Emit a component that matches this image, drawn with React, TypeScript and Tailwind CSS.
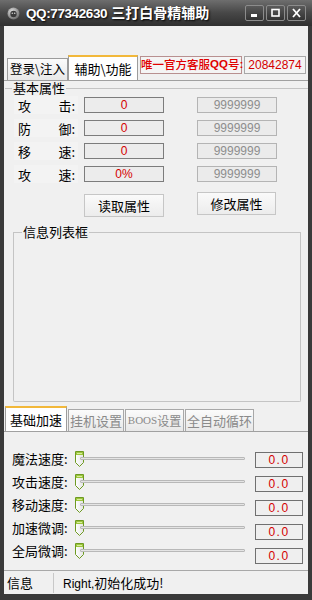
// 三打白骨精辅助 window: dark frame, two tab strips, attribute rows and speed sliders.

const rows = [
  { a: "攻", b: "击:", val: "0" },
  { a: "防", b: "御:", val: "0" },
  { a: "移", b: "速:", val: "0" },
  { a: "攻", b: "速:", val: "0%" },
];

const speeds = ["魔法速度:", "攻击速度:", "移动速度:", "加速微调:", "全局微调:"];

function WinButton({ kind }: { kind: "min" | "max" | "close" }) {
  return (
    <div className="flex h-[16px] w-[19px] items-center justify-center rounded-[2px] border border-[#8c8c8c] bg-gradient-to-b from-[#5a5a5a] to-[#333333]">
      <svg width="11" height="10" viewBox="0 0 11 10">
        {kind === "min" && <rect x="2" y="6" width="6" height="3" fill="#fff" />}
        {kind === "max" && (
          <rect x="2" y="1.5" width="7" height="6.5" fill="none" stroke="#fff" strokeWidth="1.6" />
        )}
        {kind === "close" && (
          <path d="M2 1 L9 9 M9 1 L2 9" stroke="#fff" strokeWidth="1.8" />
        )}
      </svg>
    </div>
  );
}

function TitleBar() {
  return (
    <div className="flex h-[26px] shrink-0 items-center bg-gradient-to-b from-[#6e6e6e] via-[#474747] to-[#303030] pl-[7px] pr-[6px]">
      <svg width="13" height="13" viewBox="0 0 13 13">
        <defs>
          <radialGradient id="ic" cx="40%" cy="35%" r="65%">
            <stop offset="0%" stopColor="#e8e8e8" />
            <stop offset="100%" stopColor="#707070" />
          </radialGradient>
        </defs>
        <circle cx="6.5" cy="6.5" r="6" fill="url(#ic)" />
        <circle cx="6.5" cy="7" r="3.2" fill="#3a3a3a" />
        <circle cx="5.3" cy="6.3" r="0.8" fill="#cfcfcf" />
        <circle cx="7.7" cy="6.3" r="0.8" fill="#cfcfcf" />
      </svg>
      <div className="ml-[6px] flex items-baseline font-bold text-white [text-shadow:1px_1px_2px_#000]">
        <span className="font-['Liberation_Sans',sans-serif] text-[13.5px] tracking-[-0.4px]">
          QQ:77342630
        </span>
        <span className="ml-[4px] text-[14px]">三打白骨精辅助</span>
      </div>
      <div className="ml-auto flex gap-[2px]">
        <WinButton kind="min" />
        <WinButton kind="max" />
        <WinButton kind="close" />
      </div>
    </div>
  );
}

function Thumb() {
  return (
    <svg width="9" height="16" viewBox="0 0 9 16" className="shrink-0">
      <defs>
        <linearGradient id="tb" x1="0" y1="0" x2="1" y2="0">
          <stop offset="0%" stopColor="#ffffff" />
          <stop offset="100%" stopColor="#e4e4e4" />
        </linearGradient>
      </defs>
      <path d="M0.5 0.5 H8.5 V11.5 L4.5 15.5 L0.5 11.5 Z" fill="url(#tb)" stroke="#6e9a22" />
      <rect x="1" y="1" width="7" height="3" fill="#9cc63c" />
      <rect x="2" y="2" width="5" height="1" fill="#d8ee9c" />
    </svg>
  );
}

export default function App() {
  return (
    <div className="flex h-[600px] w-[312px] flex-col overflow-hidden bg-[#3a3a3a] font-['Noto_Sans_CJK_SC','Noto_Sans',sans-serif] text-[12px] text-black">
      <TitleBar />
      <div className="mx-[4px] flex h-[568px] flex-col bg-[#f0f0f0]">
        {/* top tab strip */}
        <div className="mt-[29px] flex h-[25px] items-end pl-[3px]">
          <div className="flex h-[22px] w-[61px] items-center justify-center whitespace-nowrap border border-b-0 border-[#9c9c9c] bg-gradient-to-b from-[#fbfbfb] to-[#e8e8e8] text-[12.5px] leading-none">
            登录\注入
          </div>
          <div className="flex h-[25px] w-[70px] items-center justify-center whitespace-nowrap border-x border-t-2 border-x-[#9c9c9c] border-t-[#f2b83a] bg-white text-[13px] leading-none">
            辅助\功能
          </div>
          <div className="mb-[6px] ml-[2px] flex h-[18px] w-[102px] items-center whitespace-nowrap border border-[#b89090] bg-[#f4f4f4] text-[11.5px] font-medium leading-none text-[#e00000]">
            唯一官方客服<span className="font-['Liberation_Sans',sans-serif] text-[11.5px] font-bold">QQ</span>号<span className="font-['Liberation_Sans',sans-serif] font-bold">:</span>
          </div>
          <div className="mb-[6px] ml-[2px] flex h-[18px] w-[62px] items-center justify-center border border-[#a8a8a8] bg-[#f4f4f4] font-['Liberation_Sans',sans-serif] text-[12px] leading-none text-[#d40000]">
            20842874
          </div>
        </div>

        {/* tab panel */}
        <div className="flex h-[322px] flex-col border-t border-[#a0a0a0]">
          <div className="flex h-[14px] items-center">
            <div className="ml-[1px] w-[7px] border-t border-[#c4c4c4]" />
            <span className="px-[1px] text-[13px] leading-[14px]">基本属性</span>
            <div className="flex-1 border-t border-[#c4c4c4]" />
          </div>

          <div className="mt-[2px] flex flex-col gap-[7px]">
            {rows.map((r, i) => (
              <div key={i} className="flex h-[16px] items-center">
                <div className="ml-[10px] flex h-[18px] w-[64px] items-center justify-between bg-[#f3f3f3] pl-[4px] pr-[3px] text-[13px] leading-none">
                  <span>{r.a}</span>
                  <span>{r.b}</span>
                </div>
                <div className="ml-[6px] flex h-[16px] w-[80px] items-center justify-center border border-[#7c7c7c] bg-[#ececec] font-['Liberation_Sans',sans-serif] text-[12px] leading-none text-[#d40000]">
                  {r.val}
                </div>
                <div className="ml-[33px] flex h-[16px] w-[80px] items-center justify-center border border-[#b4b4b4] bg-[#ebebeb] font-['Liberation_Sans',sans-serif] text-[12px] leading-none text-[#8e8e8e]">
                  9999999
                </div>
              </div>
            ))}
          </div>

          <div className="mt-[10px] flex items-start">
            <div className="ml-[80px] mt-[2px] flex h-[23px] w-[80px] items-center justify-center border border-[#c6c6c6] bg-gradient-to-b from-[#fafafa] to-[#ececec] text-[13px] leading-none">
              读取属性
            </div>
            <div className="ml-[33px] flex h-[23px] w-[79px] items-center justify-center border border-[#c6c6c6] bg-gradient-to-b from-[#fafafa] to-[#ececec] text-[13px] leading-none">
              修改属性
            </div>
          </div>

          <div className="ml-[9px] mt-[8px] flex w-[288px] flex-1 flex-col">
            <div className="flex h-[14px]">
              <div className="h-[7px] w-[9px] self-end border-l border-t border-[#c4c4c4]" />
              <span className="px-[1px] text-[13px] leading-[14px]">信息列表框</span>
              <div className="h-[7px] flex-1 self-end border-r border-t border-[#c4c4c4]" />
            </div>
            <div className="flex-1 rounded-b-[2px] border-x border-b border-[#c4c4c4]" />
          </div>
        </div>

        {/* bottom tab strip */}
        <div className="mt-[5px] flex h-[25px] items-end border-b border-[#a0a0a0] pl-[1px]">
          <div className="flex h-[25px] w-[62px] items-center justify-center whitespace-nowrap border-x border-t-2 border-x-[#9c9c9c] border-t-[#f2b83a] bg-white text-[13px] leading-none">
            基础加速
          </div>
          <div className="ml-[1px] flex h-[22px] w-[56px] items-center justify-center whitespace-nowrap border border-b-0 border-[#a8a8a8] bg-gradient-to-b from-[#fbfbfb] to-[#e8e8e8] text-[13px] leading-none text-[#8a8a8a]">
            挂机设置
          </div>
          <div className="ml-[1px] flex h-[22px] w-[59px] items-center justify-center whitespace-nowrap border border-b-0 border-[#a8a8a8] bg-gradient-to-b from-[#fbfbfb] to-[#e8e8e8] text-[12px] leading-none text-[#8a8a8a]">
            <span className="font-['Liberation_Serif',serif] text-[11px]">BOOS</span>设置
          </div>
          <div className="ml-[1px] flex h-[22px] w-[69px] items-center justify-center whitespace-nowrap border border-b-0 border-[#a8a8a8] bg-gradient-to-b from-[#fbfbfb] to-[#e8e8e8] text-[13px] leading-none text-[#8a8a8a]">
            全自动循环
          </div>
        </div>

        {/* sliders */}
        <div className="flex h-[136px] items-start">
          <div className="mt-[15px] flex flex-1 flex-col">
            {speeds.map((s) => (
              <div key={s} className="flex h-[23px] items-center">
                <span className="ml-[8px] w-[62px] whitespace-nowrap text-[13px] leading-none">{s}</span>
                <div className="ml-[1px] flex w-[170px] items-center">
                  <Thumb />
                  <div className="-ml-[4px] h-[3px] flex-1 rounded-[1px] border border-[#b8b8b8] bg-[#e4e4e4]" />
                </div>
              </div>
            ))}
          </div>
          <div className="mr-[5px] mt-[20px] flex flex-col gap-[8px]">
            {speeds.map((s) => (
              <div
                key={s}
                className="flex h-[16px] w-[48px] items-center justify-center border border-[#707070] bg-[#efefef] font-['Liberation_Sans',sans-serif] text-[12px] leading-none tracking-[1.5px] text-[#d40000]"
              >
                0.0
              </div>
            ))}
          </div>
        </div>

        {/* status bar */}
        <div className="mt-auto flex h-[24px] items-center border-t border-[#a8a8a8] bg-[#f0f0f0]">
          <span className="ml-[3px] w-[46px] text-[13px] leading-none">信息</span>
          <div className="h-[20px] border-l border-[#c8c8c8]" />
          <span className="ml-[9px] text-[13px] leading-none">
            <span className="font-['Liberation_Sans',sans-serif] text-[12px]">Right,</span>初始化成功!
          </span>
        </div>
      </div>
    </div>
  );
}
